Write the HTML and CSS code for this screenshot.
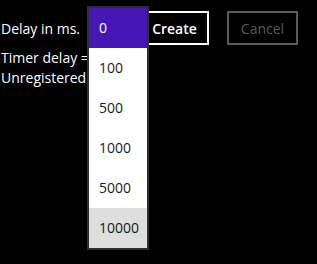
FILE: index.html
```html
<!DOCTYPE html>
<html lang="en">
<head>
    <meta charset="UTF-8">
    <title>Timer</title>
    <link rel="stylesheet" href="styles.css">
</head>
<body>
    <div class="toolbar">
        <span class="label">Delay in ms.</span>
        <div class="combo"></div>
        <button class="btn create">Create</button>
        <button class="btn cancel" disabled>Cancel</button>
    </div>
    <div class="status">
        <div>Timer delay =</div>
        <div>Unregistered</div>
    </div>

    <ul class="dropdown">
        <li class="selected">0</li>
        <li>100</li>
        <li>500</li>
        <li>1000</li>
        <li>5000</li>
        <li class="hover">10000</li>
    </ul>
</body>
</html>
```

FILE: styles.css
```css
body {
    margin: 0;
    background: #000;
    color: #fff;
    font-family: "Open Sans", "Noto Sans", sans-serif;
    font-size: 14px;
}

.toolbar {
    display: flex;
    align-items: center;
    height: 56px;
    padding-left: 1px;
}

.label {
    width: 87px;
}

.combo {
    width: 52px;
    height: 33px;
}

.btn {
    font-family: inherit;
    font-size: 14px;
    background: #000;
    height: 34px;
    padding: 0;
    margin-right: 18px;
}

.create {
    color: #fff;
    border: 2px solid #fff;
    width: 69px;
    font-weight: 600;
}

.cancel {
    color: #5a5a5a;
    border: 2px solid #5a5a5a;
    width: 71px;
    font-weight: 400;
}

.status {
    margin-top: -8px;
    padding-left: 1px;
    line-height: 20px;
}

.dropdown {
    position: absolute;
    left: 87px;
    top: 6px;
    width: 58px;
    margin: 0;
    padding: 0;
    list-style: none;
    border: 2px solid #2e2e2e;
    background: #fff;
}

.dropdown li {
    height: 40px;
    line-height: 40px;
    padding-left: 10px;
    color: #1a1a1a;
}

.dropdown .selected {
    background: #4617b4;
    color: #fff;
}

.dropdown .hover {
    background: #dedede;
}
```
